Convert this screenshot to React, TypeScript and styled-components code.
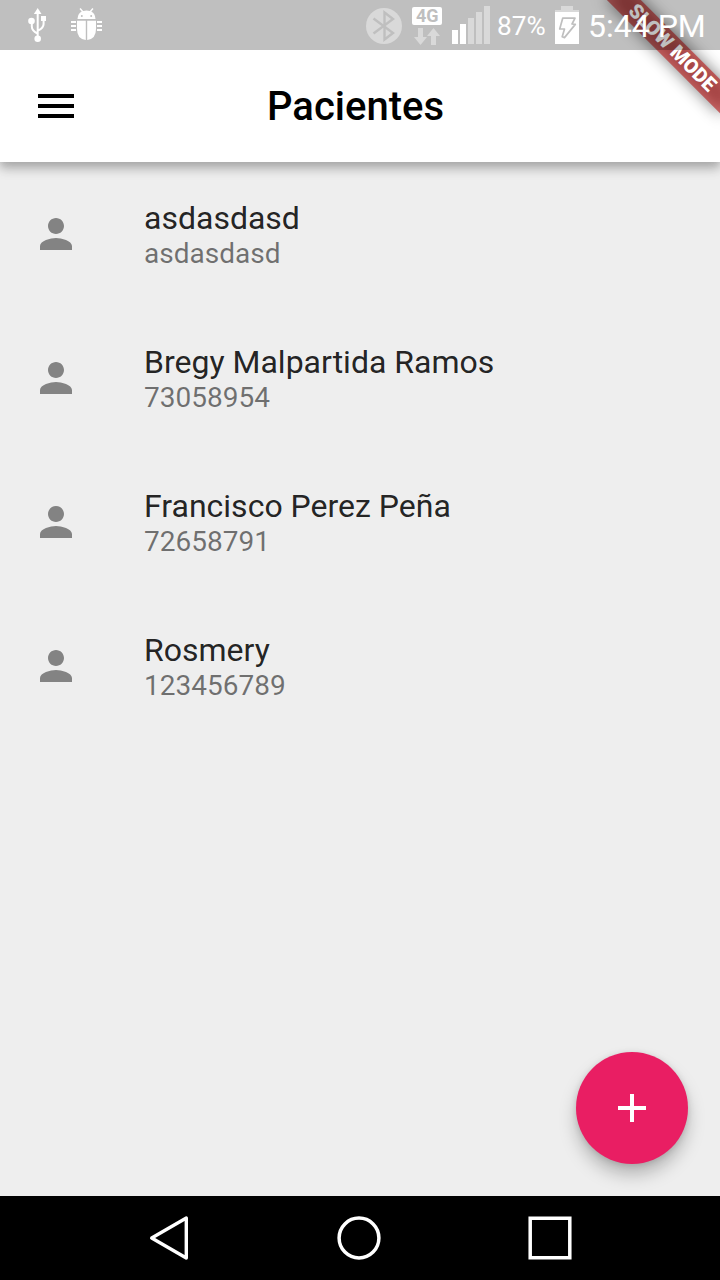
import React from 'react';
import styled, { createGlobalStyle } from 'styled-components';

const GlobalStyle = createGlobalStyle`
  * { box-sizing: border-box; }
  body { margin: 0; background: #eeeeee; font-family: Roboto, sans-serif; }
  svg { display: block; flex: none; }
`;

const Screen = styled.div`
  position: relative;
  display: flex;
  flex-direction: column;
  width: 720px;
  height: 1280px;
  overflow: hidden;
  background: #eeeeee;
`;

const StatusBar = styled.div`
  position: absolute;
  inset: 0 0 auto 0;
  z-index: 3;
  display: flex;
  align-items: center;
  height: 50px;
  padding: 0 0 0 27px;
  background: rgba(0, 0, 0, 0.25);
  color: #fff;
`;

const Notifications = styled.div`
  display: flex;
  gap: 23px;
  margin-right: auto;
`;

const SystemIcons = styled.div`
  display: flex;
  align-items: center;
  width: 354px;
`;

const Spacer = styled.span<{ $w: number }>`
  flex: 0 0 ${(p) => p.$w}px;
`;

const BatteryLevel = styled.span`
  width: 58px;
  padding: 1px 0 0 7px;
  margin-right: 7px;
  font-size: 26.2px;
  line-height: 30px;
  white-space: nowrap;
`;

const Clock = styled.span`
  padding: 1px 0 0 9px;
  font-size: 32px;
  line-height: 38px;
  white-space: nowrap;
`;

const AppBar = styled.header`
  position: relative;
  z-index: 1;
  display: grid;
  grid-template-columns: 112px 1fr 120px;
  align-items: center;
  flex: none;
  height: 162px;
  padding-top: 50px;
  background: #fff;
  box-shadow: 0 4px 8px rgba(0, 0, 0, 0.14), 0 8px 10px rgba(0, 0, 0, 0.14),
    0 2px 16px rgba(0, 0, 0, 0.08);
`;

const MenuButton = styled.button`
  display: flex;
  justify-content: center;
  padding: 0;
  border: 0;
  background: none;
`;

const Title = styled.h1`
  margin: 2px 1px 0 0;
  font-size: 40px;
  font-weight: 500;
  line-height: 48px;
  text-align: center;
  color: #000;
`;

const ModeBanner = styled.div`
  position: absolute;
  top: 0;
  right: -80px;
  z-index: 2;
  width: 160px;
  height: 80px;
  padding-top: 56px;
  transform: rotate(45deg);
  transform-origin: 80px 0;

  &::before {
    content: '';
    position: absolute;
    inset: 56px 0 0 0;
    background: rgba(0, 0, 0, 0.5);
    filter: blur(8px);
  }
`;

const BannerLabel = styled.div`
  position: relative;
  height: 24px;
  background: rgba(183, 28, 28, 0.627);
  color: #fff;
  font-size: 20px;
  font-weight: 900;
  line-height: 22px;
  text-align: center;
  white-space: nowrap;
`;

const PatientList = styled.ul`
  flex: 1;
  margin: 0;
  padding: 0;
  list-style: none;
`;

const PatientRow = styled.li`
  display: flex;
  align-items: center;
  gap: 64px;
  height: 144px;
  padding: 0 32px;
`;

const PatientText = styled.div`
  padding-top: 2px;
`;

const PatientName = styled.div`
  font-size: 32px;
  line-height: 37px;
  color: rgba(0, 0, 0, 0.87);
`;

const PatientId = styled.div`
  font-size: 28px;
  line-height: 33px;
  color: rgba(0, 0, 0, 0.54);
`;

const AddButton = styled.button`
  position: absolute;
  right: 32px;
  bottom: 116px;
  display: flex;
  align-items: center;
  justify-content: center;
  width: 112px;
  height: 112px;
  padding: 0;
  border: 0;
  border-radius: 50%;
  background: #e91e63;
  box-shadow: 0 11px 18px -1px rgba(0, 0, 0, 0.26), 0 1px 6px rgba(0, 0, 0, 0.12);
`;

const NavigationBar = styled.nav`
  display: flex;
  align-items: center;
  gap: 146px;
  flex: none;
  height: 84px;
  padding-left: 147px;
  background: #000;
`;

const patients = [
  { name: 'asdasdasd', id: 'asdasdasd' },
  { name: 'Bregy Malpartida Ramos', id: '73058954' },
  { name: 'Francisco Perez Peña', id: '72658791' },
  { name: 'Rosmery', id: '123456789' },
];

const UsbIcon = () => (
  <svg width="20" height="50" viewBox="27 0 20 50" fill="#fff">
    <path d="M37.7 8l3.8 6h-7.6z" />
    <circle cx="31.5" cy="21" r="3.3" />
    <rect x="41" y="16" width="5" height="5" />
    <circle cx="37.7" cy="38.8" r="3.3" />
    <path d="M37.7 12v26M31.8 22v4.5q0 4 5.6 7M43.6 20v4q0 4-5.6 6.5" fill="none" stroke="#fff" strokeWidth="2" />
  </svg>
);

const BugIcon = () => (
  <svg width="32" height="50" viewBox="70 0 32 50">
    <path d="M77.500 19q.4-5.600 4.200-7.400l-2.200-2.600 1.100-.9 2.600 3q3.500-1.200 6.600 0l2.600-3 1.100.9-2.200 2.600q3.800 1.800 4.200 7.400z" fill="#fff" />
    <path d="M77 20.700h8.800V40Q77 39 77 29zM87.200 20.700H96V29q0 10-8.800 11z" fill="#fff" />
    <path d="M71 22h5M71 26h5M71 30h5M97 22h5M97 26h5M97 30h5" stroke="#fff" strokeWidth="1.8" />
    <circle cx="81.8" cy="16" r="1" fill="#bfbfbf" />
    <circle cx="91.2" cy="16" r="1" fill="#bfbfbf" />
  </svg>
);

const BluetoothIcon = () => (
  <svg width="36" height="50" viewBox="366 0 36 50">
    <circle cx="384" cy="26" r="18" fill="#d9d9d9" />
    <path d="M373.500 18.500L393 33l-8.500 6.500v-27L393 19l-19.500 14.500" fill="none" stroke="#bfbfbf" strokeWidth="2.4" />
  </svg>
);

const NetworkIcon = () => (
  <svg width="30" height="50" viewBox="412 0 30 50">
    <rect x="412" y="7" width="30" height="18" rx="2" fill="#fff" />
    <text x="427.2" y="22.4" textAnchor="middle" fontFamily="Roboto, sans-serif" fontSize="18" fontWeight="700" fill="#bfbfbf">4G</text>
    <path d="M418 28h5v9h4l-6.500 8-6.500-8h4zM431 45h5v-9h4l-6.500-8-6.500 8h4z" fill="#d9d9d9" />
  </svg>
);

const SignalIcon = () => (
  <svg width="38" height="50" viewBox="452 0 38 50">
    <path d="M452 30h6v14h-6zM460 24h6v20h-6z" fill="#fff" />
    <path d="M468 18h6v26h-6zM476 12h6v32h-6zM484 6h6v38h-6z" fill="#d9d9d9" />
  </svg>
);

const BatteryIcon = () => (
  <svg width="24" height="50" viewBox="555 0 24 50">
    <path d="M561 6h12v4h6v2h-24v-2h6z" fill="#d9d9d9" />
    <path d="M555 12h24v32h-24z" fill="#fff" />
    <path
      d="M562.700 18.200h12.300l-3 5.800 3.300.4-10.800 13.200-2.300-.9 2.300-7.700h-4.800z"
      fill="none"
      stroke="#bfbfbf"
      strokeWidth="1.7"
      strokeLinejoin="round"
    />
  </svg>
);

const PersonIcon = () => (
  <svg width="48" height="48" viewBox="0 0 24 24" fill="rgba(0,0,0,.45)">
    <path d="M12 12c2.210 0 4-1.790 4-4s-1.790-4-4-4-4 1.790-4 4 1.790 4 4 4zm0 2c-2.670 0-8 1.340-8 4v2h16v-2c0-2.660-5.330-4-8-4z" />
  </svg>
);

export default function App() {
  return (
    <>
      <GlobalStyle />
      <Screen>
        <StatusBar>
          <Notifications>
            <UsbIcon />
            <BugIcon />
          </Notifications>
          <SystemIcons>
            <BluetoothIcon />
            <Spacer $w={10} />
            <NetworkIcon />
            <Spacer $w={10} />
            <SignalIcon />
            <BatteryLevel>87%</BatteryLevel>
            <BatteryIcon />
            <Clock>5:44 PM</Clock>
          </SystemIcons>
        </StatusBar>

        <AppBar>
          <MenuButton aria-label="Menu">
            <svg width="48" height="48" viewBox="0 0 24 24">
              <path d="M3 18h18v-2H3v2zm0-5h18v-2H3v2zm0-7v2h18V6H3z" />
            </svg>
          </MenuButton>
          <Title>Pacientes</Title>
        </AppBar>

        <ModeBanner>
          <BannerLabel>SLOW MODE</BannerLabel>
        </ModeBanner>

        <PatientList>
          {patients.map((p) => (
            <PatientRow key={p.name}>
              <PersonIcon />
              <PatientText>
                <PatientName>{p.name}</PatientName>
                <PatientId>{p.id}</PatientId>
              </PatientText>
            </PatientRow>
          ))}
        </PatientList>

        <AddButton aria-label="Add">
          <svg width="48" height="48" viewBox="0 0 24 24" fill="#fff">
            <path d="M19 13h-6v6h-2v-6H5v-2h6V5h2v6h6v2z" />
          </svg>
        </AddButton>

        <NavigationBar>
          <svg width="44" height="46" viewBox="147 1215 44 46" fill="none" stroke="#fff" strokeWidth="3.4" strokeLinejoin="round">
            <path d="M151.700 1238L186.300 1218v40z" />
          </svg>
          <svg width="44" height="46" viewBox="337 1215 44 46" fill="none" stroke="#fff" strokeWidth="3.5">
            <circle cx="359" cy="1238" r="19.9" />
          </svg>
          <svg width="46" height="46" viewBox="527 1215 46 46" fill="none" stroke="#fff" strokeWidth="3.5">
            <path d="M530.200 1218.200h39.600v39.600h-39.600z" />
          </svg>
        </NavigationBar>
      </Screen>
    </>
  );
}
